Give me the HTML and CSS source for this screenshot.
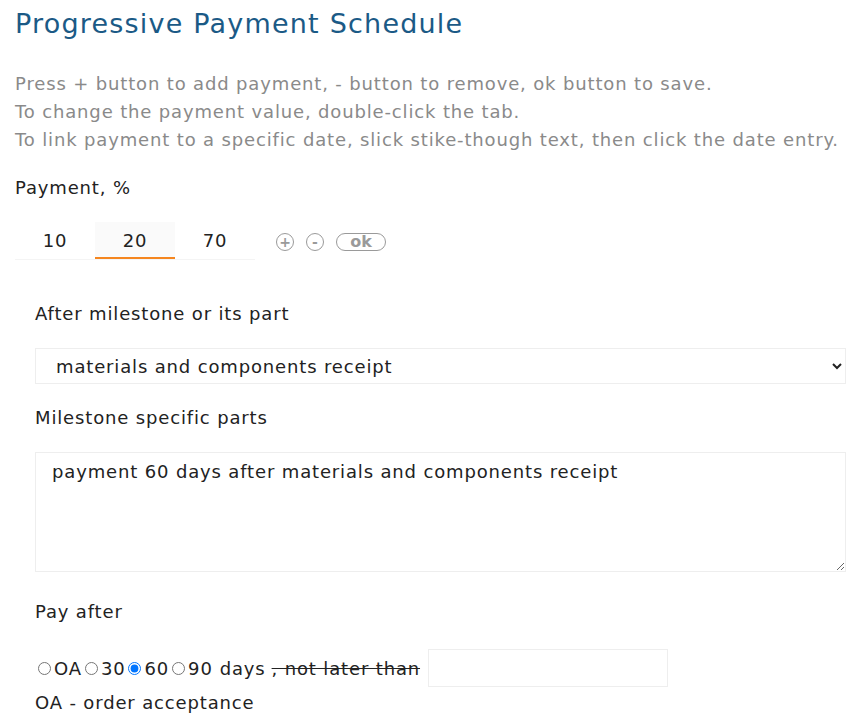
FILE: index.html
```html
<!DOCTYPE html>
<html lang="en">
<head>
  <meta charset="UTF-8">
  <title>Progressive Payment Schedule</title>
  <link rel="stylesheet" href="styles.css">
</head>
<body>
  <div class="schedule">
    <h1>Progressive Payment Schedule</h1>
    <div class="help">
      <p>Press + button to add payment, - button to remove, ok button to save.</p>
      <p>To change the payment value, double-click the tab.</p>
      <p>To link payment to a specific date, slick stike-though text, then click the date entry.</p>
    </div>

    <div class="label">Payment, %</div>
    <div class="tabs-row">
      <div class="tabs">
        <div class="tab">10</div>
        <div class="tab active">20</div>
        <div class="tab">70</div>
      </div>
      <div class="actions">
        <button class="round">+</button>
        <button class="round">-</button>
        <button class="pill">ok</button>
      </div>
    </div>

    <div class="panel">
      <div class="field-label">After milestone or its part</div>
      <select class="milestone">
        <option>materials and components receipt</option>
      </select>

      <div class="field-label">Milestone specific parts</div>
      <textarea class="parts">payment 60 days after materials and components receipt</textarea>

      <div class="field-label pay">Pay after</div>
      <div class="pay-row">
        <label><input type="radio" name="after">OA</label>
        <label><input type="radio" name="after">30</label>
        <label><input type="radio" name="after" checked>60</label>
        <label><input type="radio" name="after">90</label>
        <span class="days">days</span>
        <span class="strike">, not later than</span>
        <input type="text" class="date">
      </div>
      <div class="note">OA - order acceptance</div>
    </div>
  </div>
</body>
</html>
```

FILE: styles.css
```css
body {
  margin: 0;
  padding: 0;
  background: #fff;
  font-family: "DejaVu Sans", Arial, sans-serif;
  font-size: 18px;
  letter-spacing: 0.85px;
  color: #222;
}
.schedule {
  padding-left: 15px;
}
h1 {
  margin: 0;
  padding-top: 5px;
  font-size: 27px;
  font-weight: 400;
  letter-spacing: 1.2px;
  line-height: 37px;
  color: #1b5a86;
}
.help {
  margin-top: 28px;
  color: #8a8a8a;
  line-height: 28px;
}
.help p {
  margin: 0;
}
.label {
  margin-top: 22px;
  line-height: 24px;
}
.tabs-row {
  display: flex;
  align-items: center;
  margin-top: 22px;
}
.tabs {
  display: flex;
  border-bottom: 1px solid #f4f4f4;
}
.tab {
  width: 80px;
  height: 35px;
  line-height: 38px;
  text-align: center;
  border-bottom: 2px solid transparent;
}
.tab.active {
  background: #fafafa;
  border-bottom-color: #f5861f;
}
.actions {
  display: flex;
  align-items: center;
  gap: 12px;
  margin-left: 21px;
  margin-top: 2px;
}
.round, .pill {
  box-sizing: border-box;
  border: 1.5px solid #9a9a9a;
  background: #fff;
  color: #9a9a9a;
  font-family: inherit;
  font-weight: 700;
  letter-spacing: 0;
  padding: 0;
  cursor: pointer;
}
.round {
  width: 18px;
  height: 18px;
  border-radius: 50%;
  font-size: 14px;
  line-height: 14px;
}
.pill {
  width: 50px;
  height: 18px;
  border-radius: 9px;
  font-size: 16px;
  line-height: 14px;
}
.panel {
  padding: 42px 20px 0;
}
.field-label {
  line-height: 24px;
  margin-bottom: 22px;
}
.field-label.pay {
  margin-bottom: 25px;
}
.milestone {
  display: block;
  width: 100%;
  height: 36px;
  padding: 0 16px;
  margin-bottom: 22px;
  border: 1px solid #eee;
  background: #fff;
  font-family: inherit;
  font-size: 18px;
  letter-spacing: 0.85px;
  color: #222;
}
.parts {
  display: block;
  box-sizing: border-box;
  width: 100%;
  height: 120px;
  padding: 8px 16px;
  margin-bottom: 28px;
  border: 1px solid #eee;
  font-family: inherit;
  font-size: 18px;
  letter-spacing: 0.85px;
  color: #222;
  resize: vertical;
}
.pay-row {
  display: flex;
  align-items: center;
}
.pay-row label {
  display: flex;
  align-items: center;
}
.pay-row input[type="radio"] {
  margin: 0 3px 0 3px;
  width: 13px;
  height: 13px;
}
.days {
  margin-left: 7px;
}
.strike {
  margin-left: 6px;
  text-decoration: line-through;
  cursor: pointer;
}
.date {
  margin-left: 8px;
  width: 240px;
  height: 38px;
  box-sizing: border-box;
  border: 1px solid #eee;
}
.note {
  margin-top: 4px;
  line-height: 24px;
}
```
